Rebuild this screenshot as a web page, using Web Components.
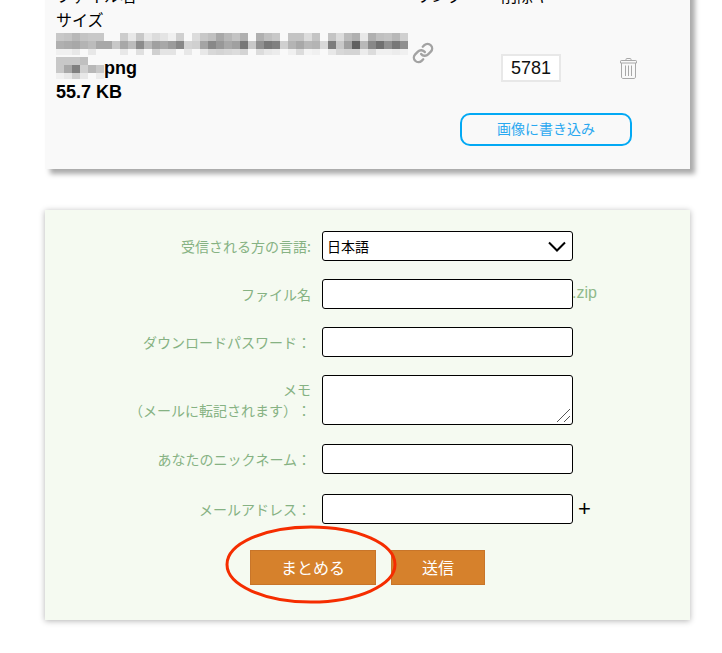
<!DOCTYPE html>
<html lang="ja">
<head>
<meta charset="utf-8">
<title>ファイル送信</title>
<style>
    html, body { margin: 0; padding: 0; background: #fff; overflow: hidden; }
</style>
</head>
<body>
<upload-page></upload-page>

<script>
class UploadPage extends HTMLElement {
    constructor() {
        super();
        this.attachShadow({ mode: 'open' });
    }

    connectedCallback() {
        this.shadowRoot.innerHTML = `
            <style>
                :host {
                    display: flex;
                    flex-direction: column;
                    gap: 41px;
                    box-sizing: border-box;
                    width: 722px;
                    height: 653px;
                    padding: 0 32px 0 45px;
                    overflow: hidden;
                    font-family: "Liberation Sans", "Noto Sans CJK JP", sans-serif;
                    font-size: 16px;
                    color: #000;
                }
            </style>
            <file-card></file-card>
            <mail-form></mail-form>
        `;
    }
}

// pixelated file name, one array of grays per row
class FileMosaic extends HTMLElement {
    constructor() {
        super();
        this.attachShadow({ mode: 'open' });
        this.CELL = 8;
        this.ROW_HEIGHTS = [8, 8, 6];
    }

    get data() {
        return this.props;
    }

    set data(value) {
        this.props = value;
        this.render();
    }

    render = () => {
        let y = 0;
        let rects = '';
        this.props.forEach((row, r) => {
            row.forEach((gray, i) => {
                rects += `<rect x="${i * this.CELL}" y="${y}" width="${this.CELL}" height="${this.ROW_HEIGHTS[r]}" fill="#${gray}${gray}${gray}"/>`;
            });
            y += this.ROW_HEIGHTS[r];
        });
        const width = this.props[0].length * this.CELL;
        this.shadowRoot.innerHTML = `
            <style>
                :host { display: block; line-height: 0; }
                svg { display: block; }
            </style>
            <svg width="${width}" height="${y}" viewBox="0 0 ${width} ${y}" shape-rendering="crispEdges">${rects}</svg>
        `;
    }
}

class FileCard extends HTMLElement {
    constructor() {
        super();
        this.attachShadow({ mode: 'open' });
    }

    connectedCallback() {
        this.shadowRoot.innerHTML = `
            <style>
                :host {
                    display: block;
                    box-sizing: border-box;
                    margin-top: -42px;
                    padding: 24px 0 23px 11px;
                    background: #f9f9f9;
                    box-shadow: 5px 5px 5px #aaa;
                    line-height: 24px;
                }
                .table {
                    display: grid;
                    grid-template-columns: 356px 89px 119px auto;
                }
                .head {
                    box-sizing: border-box;
                    height: 50px;
                    padding-top: 1px;
                    font-family: "Noto Sans CJK JP", sans-serif;
                }
                .head-link { padding-left: 3px; }
                .name-cell { display: flex; flex-direction: column; }
                .line { display: flex; height: 24px; }
                .line file-mosaic { margin-top: 1px; }
                .ext { font-size: 18px; font-weight: bold; }
                .size { font-size: 18px; font-weight: bold; }
                .link { margin-top: 10px; }
                .link svg { display: block; }
                .key {
                    align-self: center;
                    box-sizing: border-box;
                    width: 60px;
                    height: 28px;
                    margin: 0;
                    padding: 0;
                    border: 2px solid #e8e8e8;
                    border-radius: 0;
                    background: #fff;
                    font: 18px "Liberation Sans", sans-serif;
                    color: #111;
                    text-align: center;
                    outline: none;
                }
                .trash { align-self: center; }
                .trash svg { display: block; }
                .actions {
                    display: flex;
                    justify-content: flex-end;
                    margin-top: 9px;
                    padding-right: 58px;
                }
                .write {
                    box-sizing: border-box;
                    width: 172px;
                    height: 33px;
                    padding: 0 0 3px;
                    border: 2px solid #03a9f4;
                    border-radius: 10px;
                    background: transparent;
                    font: 14px "Noto Sans CJK JP", sans-serif;
                    color: #29a8f0;
                }
            </style>
            <div class="table">
                <div class="head">ファイル名<br>サイズ</div>
                <div class="head head-link">リンク</div>
                <div class="head">削除キー</div>
                <div></div>

                <div class="name-cell">
                    <div class="line"><file-mosaic id="m1"></file-mosaic></div>
                    <div class="line"><file-mosaic id="m2"></file-mosaic><span class="ext">png</span></div>
                    <div class="size">55.7 KB</div>
                </div>
                <div class="link">
                    <svg width="22" height="22" viewBox="0 0 24 24" fill="none" stroke="#a3a3a3" stroke-width="2.6" stroke-linecap="round" stroke-linejoin="round">
                        <path d="M10 13a5 5 0 0 0 7.54.54l3-3a5 5 0 0 0-7.07-7.07l-1.72 1.71"/>
                        <path d="M14 11a5 5 0 0 0-7.54-.54l-3 3a5 5 0 0 0 7.07 7.07l1.71-1.71"/>
                    </svg>
                </div>
                <input class="key" type="text" value="5781">
                <div class="trash">
                    <svg width="17" height="21" viewBox="0 0 17 21" fill="none" stroke="#a8a8a8" stroke-width="1">
                        <path d="M6 2.5V1.2c0-.4.3-.7.7-.7h3.6c.4 0 .7.3.7.7v1.3"/>
                        <path d="M1.2 2.5h14.6c.4 0 .7.3.7.7v1.8H.5V3.200c0-.4.3-.7.7-.7z"/>
                        <path d="M1.500 5v14c0 .8.7 1.500 1.500 1.500h11c.8 0 1.500-.7 1.500-1.500V5"/>
                        <path d="M5.500 7.500v10.500M8.500 7.500v10.500M11.500 7.500v10.500"/>
                    </svg>
                </div>
            </div>
            <div class="actions"><button class="write" type="button">画像に書き込み</button></div>
        `;
        this.shadowRoot.querySelector('#m1').data = [
            ['c8','c4','b8','c4','c8','c8','f9','f9','cc','e8','c8','e8','dc','e4','f0','d0','f9','dc','c8','c0','a8','b8','c4','b0','f9','b0','c0','c8','f9','c4','c4','dc','c4','f9','c4','dc','bc','b0','e8','b0','c0','c4','b8','d0'],
            ['b0','ac','a8','b4','bc','a8','a8','c8','a8','bc','8c','b8','a0','a8','9c','88','d4','d0','a4','88','98','a8','a0','78','c8','90','78','80','d0','b4','a8','b8','b4','d8','7c','c8','a0','60','b8','88','70','90','78','90'],
            ['f0','f0','e8','f9','e8','f9','f9','f9','e8','f9','e0','f9','d0','e4','e4','f9','e8','f9','e8','d8','d4','d8','dc','d4','f9','dc','e8','ec','f9','f0','dc','f4','f0','f9','e8','d8','d4','d4','ec','dc','f0','f0','ec','f0']
        ];
        this.shadowRoot.querySelector('#m2').data = [
            ['c8','c8','c8','c0','f9','f9'],
            ['c8','a8','80','d0','b8','c8'],
            ['f0','e8','d0','e8','f9','ec']
        ];
    }
}

class FormRow extends HTMLElement {
    constructor() {
        super();
        this.attachShadow({ mode: 'open' });
    }

    connectedCallback() {
        this.shadowRoot.innerHTML = `
            <style>
                :host {
                    display: grid;
                    grid-template-columns: 266px 251px auto;
                    column-gap: 11px;
                    align-items: center;
                }
                .label {
                    font: 14px/21px "Noto Sans CJK JP", sans-serif;
                    color: #86b283;
                    text-align: right;
                    text-spacing-trim: space-all;
                }
                .after { margin-left: -11px; }
            </style>
            <div class="label"><slot name="label"></slot></div>
            <slot></slot>
            <div class="after"><slot name="after"></slot></div>
        `;
    }
}

class MailForm extends HTMLElement {
    constructor() {
        super();
        this.attachShadow({ mode: 'open' });
    }

    connectedCallback() {
        this.shadowRoot.innerHTML = `
            <style>
                :host {
                    display: flex;
                    flex-direction: column;
                    gap: 18px;
                    position: relative;
                    box-sizing: border-box;
                    padding: 21px 0 35px;
                    background: #f5faf1;
                    box-shadow: 0 1px 6px rgba(0, 0, 0, .3);
                }
                input, select, textarea {
                    display: block;
                    box-sizing: border-box;
                    width: 251px;
                    height: 30px;
                    margin: 0;
                    padding: 0 4px;
                    border: 1px solid #000;
                    border-radius: 3px;
                    background: #fff;
                    font: 14px "Noto Sans CJK JP", sans-serif;
                    color: #000;
                    outline: none;
                    appearance: none;
                }
                textarea { height: 50px; resize: none; }
                .field-wrap { position: relative; width: 251px; }
                .field-wrap svg { position: absolute; pointer-events: none; }
                .chevron { right: 7px; top: 10px; }
                .grip { right: 2px; bottom: 2px; }
                .zip {
                    display: block;
                    margin: 0 0 2px -1px;
                    color: #8fb98a;
                    font: 16px "Liberation Sans", sans-serif;
                }
                .plus {
                    display: block;
                    margin-left: 5px;
                    font: 22px "Liberation Sans", sans-serif;
                }
                .nick { margin-top: 1px; }
                .mail { margin-top: 2px; }
                .buttons {
                    display: flex;
                    justify-content: center;
                    gap: 15px;
                    margin-top: 8px;
                }
                .buttons button {
                    box-sizing: border-box;
                    height: 35px;
                    padding: 0 0 2px;
                    border: 1px solid #c8752a;
                    background: #d6812c;
                    font: 16px "Noto Sans CJK JP", sans-serif;
                    color: #fff;
                }
                .matomeru { width: 126px; }
                .send { width: 94px; }
                .mark { position: absolute; left: 180px; top: 315px; pointer-events: none; }
            </style>
            <form-row>
                <span slot="label">受信される方の言語:</span>
                <div class="field-wrap">
                    <select><option>日本語</option></select>
                    <svg class="chevron" width="18" height="11" viewBox="0 0 18 11" fill="none" stroke="#000" stroke-width="2"><path d="M1 1.500l8 8 8-8"/></svg>
                </div>
            </form-row>
            <form-row>
                <span slot="label">ファイル名</span>
                <input type="text">
                <span slot="after" class="zip">.zip</span>
            </form-row>
            <form-row>
                <span slot="label">ダウンロードパスワード：</span>
                <input type="password">
            </form-row>
            <form-row>
                <span slot="label">メモ<br>（メールに転記されます）：</span>
                <div class="field-wrap">
                    <textarea></textarea>
                    <svg class="grip" width="15" height="15" viewBox="0 0 15 15" fill="none" stroke="#555" stroke-width="1"><path d="M1 14L14 1M8 14l6-6"/></svg>
                </div>
            </form-row>
            <form-row class="nick">
                <span slot="label">あなたのニックネーム：</span>
                <input type="text">
            </form-row>
            <form-row class="mail">
                <span slot="label">メールアドレス：</span>
                <input type="text">
                <span slot="after" class="plus">+</span>
            </form-row>
            <div class="buttons">
                <button class="matomeru" type="button">まとめる</button>
                <button class="send" type="button">送信</button>
            </div>
            <svg class="mark" width="172" height="79" viewBox="0 0 172 79" fill="none" stroke="#f52d00" stroke-width="3">
                <ellipse cx="86" cy="39.500" rx="84" ry="37.500"/>
            </svg>
        `;
    }
}

customElements.define('file-mosaic', FileMosaic);
customElements.define('file-card', FileCard);
customElements.define('form-row', FormRow);
customElements.define('mail-form', MailForm);
customElements.define('upload-page', UploadPage);
</script>
</body>
</html>
